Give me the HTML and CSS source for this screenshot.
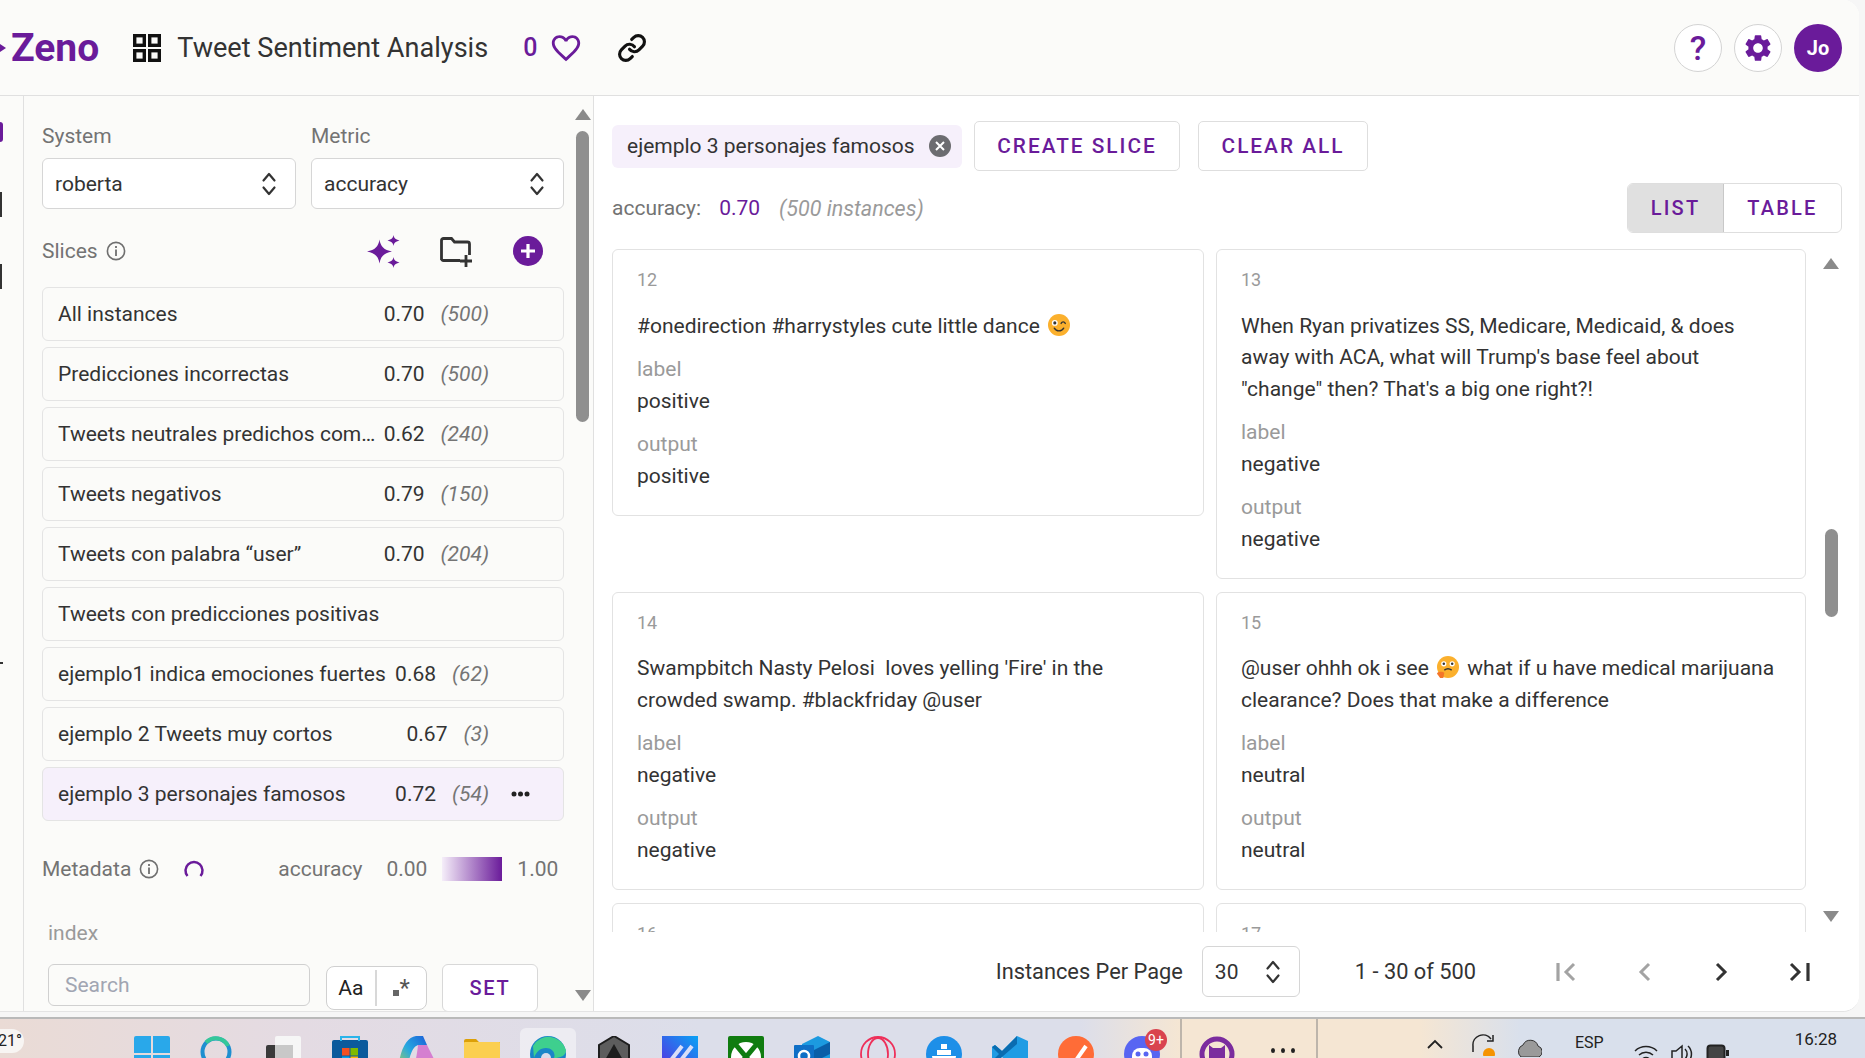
FILE: index.html
```html
<!DOCTYPE html>
<html lang="en">
<head>
<meta charset="utf-8">
<title>Zeno</title>
<link rel="stylesheet" href="styles.css">
</head>
<body>
<svg class="defs" width="0" height="0">
  <symbol id="unfold" viewBox="0 0 16 26"><path d="M2.5 9.5 8 3l5.500 6.500M2.500 16.500 8 23l5.500-6.500" fill="none" stroke="#333" stroke-width="2.200" stroke-linecap="round" stroke-linejoin="round"/></symbol>
  <symbol id="info" viewBox="0 0 20 20"><circle cx="10" cy="10" r="8.600" fill="none" stroke="#6f6f6f" stroke-width="1.600"/><rect x="9.100" y="8.500" width="1.800" height="6.500" fill="#6f6f6f"/><rect x="9.100" y="5" width="1.800" height="2" fill="#6f6f6f"/></symbol>
</svg>
<div class="window">
  <header class="topbar">
    <svg class="logo-mark" width="6" height="14" viewBox="0 0 6 14"><path d="M0 3 6 7 0 11Z" fill="#6a1b9a"/></svg>
    <span class="logo">Zeno</span>
    <svg class="grid-icon" width="28" height="28" viewBox="0 0 28 28"><g fill="none" stroke="#111" stroke-width="3.400"><rect x="1.700" y="1.700" width="9.600" height="9.600"/><rect x="16.700" y="1.700" width="9.600" height="9.600"/><rect x="1.700" y="16.700" width="9.600" height="9.600"/><rect x="16.700" y="16.700" width="9.600" height="9.600"/></g></svg>
    <span class="title">Tweet Sentiment Analysis</span>
    <span class="likes">0</span>
    <svg class="heart" width="34" height="34" viewBox="0 0 24 24"><path fill="#6a1b9a" d="M16.500 3c-1.740 0-3.410.81-4.500 2.090C10.910 3.810 9.240 3 7.500 3 4.420 3 2 5.420 2 8.500c0 3.780 3.400 6.860 8.550 11.540L12 21.350l1.450-1.320C18.600 15.360 22 12.280 22 8.500 22 5.420 19.580 3 16.500 3zm-4.400 15.550l-.1.1-.1-.1C7.140 14.240 4 11.390 4 8.500 4 6.500 5.500 5 7.500 5c1.540 0 3.040.99 3.570 2.360h1.870C13.460 5.990 14.960 5 16.500 5c2 0 3.500 1.500 3.500 3.500 0 2.890-3.140 5.740-7.900 10.050z"/></svg>
    <svg class="link-icon" width="30" height="30" viewBox="0 0 24 24"><g fill="none" stroke="#111" stroke-width="2.500" stroke-linecap="round" stroke-linejoin="round"><path d="M10 13a5 5 0 0 0 7.540.54l3-3a5 5 0 0 0-7.070-7.070l-1.720 1.710"/><path d="M14 11a5 5 0 0 0-7.540-.54l-3 3a5 5 0 0 0 7.070 7.070l1.710-1.710"/></g></svg>
    <div class="top-actions">
      <span class="round-btn help">?</span>
      <span class="round-btn"><svg width="32" height="32" viewBox="0 0 24 24"><path fill="#6a1b9a" d="M19.140 12.940c.04-.3.06-.61.06-.94 0-.32-.02-.64-.07-.94l2.030-1.580c.18-.14.23-.41.12-.61l-1.920-3.320c-.12-.22-.37-.29-.59-.22l-2.390.96c-.5-.38-1.030-.7-1.620-.94l-.36-2.540c-.04-.24-.24-.41-.48-.41h-3.840c-.24 0-.43.17-.47.41l-.36 2.540c-.59.24-1.130.57-1.620.94l-2.390-.96c-.22-.08-.47 0-.59.22L2.740 8.870c-.12.21-.08.47.12.61l2.030 1.580c-.05.3-.09.63-.09.94s.02.64.07.94l-2.030 1.580c-.18.14-.23.41-.12.61l1.920 3.320c.12.22.37.29.59.22l2.390-.96c.5.38 1.030.7 1.620.94l.36 2.540c.05.24.24.41.48.41h3.840c.24 0 .44-.17.47-.41l.36-2.540c.59-.24 1.130-.56 1.620-.94l2.390.96c.22.08.47 0 .59-.22l1.920-3.320c.12-.22.07-.47-.12-.61l-2.010-1.580zM12 15.600c-1.980 0-3.600-1.620-3.600-3.600s1.620-3.600 3.600-3.600 3.600 1.620 3.600 3.600-1.620 3.600-3.600 3.600z"/></svg></span>
      <span class="avatar">Jo</span>
    </div>
  </header>
  <div class="workspace">
    <nav class="rail">
      <i class="rail-dot"></i>
      <i class="rail-bar"></i>
      <i class="rail-bar rail-bar-second"></i>
      <i class="rail-dash"></i>
    </nav>
    <aside class="panel">
      <div class="panel-body">
        <div class="selectors">
          <div class="selector">
            <span class="field-label">System</span>
            <div class="select"><span>roberta</span><svg width="16" height="26"><use href="#unfold"/></svg></div>
          </div>
          <div class="selector">
            <span class="field-label">Metric</span>
            <div class="select"><span>accuracy</span><svg width="16" height="26"><use href="#unfold"/></svg></div>
          </div>
        </div>
        <div class="slices-head">
          <span class="field-label">Slices</span>
          <svg class="info" width="20" height="20"><use href="#info"/></svg>
          <div class="slices-tools">
            <svg class="tool-first" width="33" height="33" viewBox="0 0 33 33"><path fill="#6a1b9a" d="M12.500 4.500c1 7 4.500 10.500 12.500 12-8 1.500-11.500 5-12.500 12C11.500 21.500 8 18 0 16.500 8 15 11.500 11.500 12.500 4.500Z"/><path fill="#6a1b9a" d="M26.500 0c.5 3 1.700 4.300 6 5.500-4.300 1.200-5.500 2.500-6 5.500-.5-3-1.700-4.300-6-5.500 4.300-1.200 5.500-2.500 6-5.500ZM26.500 22c.5 3 1.700 4.300 6 5.500-4.300 1.200-5.500 2.500-6 5.500-.5-3-1.700-4.300-6-5.500 4.300-1.200 5.500-2.500 6-5.500Z"/></svg>
            <svg width="33" height="33" viewBox="0 0 33 33"><path d="M1.500 25V5.500a2 2 0 0 1 2-2h8l3 3.500h13a2 2 0 0 1 2 2V20M20 25.500H3.500a2 2 0 0 1-2-2" fill="none" stroke="#333" stroke-width="2.800"/><path d="M26 20v12M20 26h12" fill="none" stroke="#333" stroke-width="2.800"/></svg>
            <svg width="30" height="30" viewBox="0 0 30 30"><circle cx="15" cy="15" r="15" fill="#6a1b9a"/><path d="M15 8v14M8 15h14" stroke="#fff" stroke-width="3.200"/></svg>
          </div>
        </div>
        <ul class="slice-list">
          <li class="slice"><span class="slice-name">All instances</span><span class="slice-value">0.70</span><em class="slice-count">(500)</em><span class="slice-actions"></span></li>
          <li class="slice"><span class="slice-name">Predicciones incorrectas</span><span class="slice-value">0.70</span><em class="slice-count">(500)</em><span class="slice-actions"></span></li>
          <li class="slice"><span class="slice-name">Tweets neutrales predichos como negativos</span><span class="slice-value">0.62</span><em class="slice-count">(240)</em><span class="slice-actions"></span></li>
          <li class="slice"><span class="slice-name">Tweets negativos</span><span class="slice-value">0.79</span><em class="slice-count">(150)</em><span class="slice-actions"></span></li>
          <li class="slice"><span class="slice-name">Tweets con palabra “user”</span><span class="slice-value">0.70</span><em class="slice-count">(204)</em><span class="slice-actions"></span></li>
          <li class="slice"><span class="slice-name">Tweets con predicciones positivas</span></li>
          <li class="slice"><span class="slice-name">ejemplo1 indica emociones fuertes</span><span class="slice-value">0.68</span><em class="slice-count">(62)</em><span class="slice-actions"></span></li>
          <li class="slice"><span class="slice-name">ejemplo 2 Tweets muy cortos</span><span class="slice-value">0.67</span><em class="slice-count">(3)</em><span class="slice-actions"></span></li>
          <li class="slice slice-active"><span class="slice-name">ejemplo 3 personajes famosos</span><span class="slice-value">0.72</span><em class="slice-count">(54)</em><span class="slice-actions"><svg width="19" height="6" viewBox="0 0 19 6"><circle cx="3" cy="3" r="2.500"/><circle cx="9.500" cy="3" r="2.500"/><circle cx="16" cy="3" r="2.500"/></svg></span></li>
        </ul>
        <div class="meta-head">
          <span class="field-label">Metadata</span>
          <svg class="info" width="20" height="20"><use href="#info"/></svg>
          <svg class="spinner" width="20" height="20" viewBox="0 0 20 20"><path d="M3.500 17A8.500 8.500 0 1 1 16.500 17" fill="none" stroke="#6a1b9a" stroke-width="2.500"/></svg>
          <span class="scale-name">accuracy</span>
          <span class="scale-num">0.00</span>
          <span class="scale-bar"></span>
          <span class="scale-num">1.00</span>
        </div>
        <div class="meta-field">index</div>
        <div class="meta-search">
          <div class="search-box">Search</div>
          <div class="case-toggle"><span class="case-opt case-aa">Aa</span><span class="case-opt case-re"><i class="re-dot"></i><span class="re-star">*</span></span></div>
          <div class="set-btn">SET</div>
        </div>
      </div>
      <div class="scrollbar scrollbar-panel">
        <i class="arrow-up"></i>
        <i class="thumb thumb-panel"></i>
        <i class="scroll-gap"></i>
        <i class="arrow-down"></i>
      </div>
    </aside>
    <main class="main">
      <div class="filters">
        <div class="chip"><span>ejemplo 3 personajes famosos</span><svg width="22" height="22" viewBox="0 0 22 22"><circle cx="11" cy="11" r="11" fill="#6c6c70"/><path d="M7 7l8 8M15 7l-8 8" stroke="#fff" stroke-width="2"/></svg></div>
        <div class="text-btn btn-create">CREATE SLICE</div>
        <div class="text-btn btn-clear">CLEAR ALL</div>
      </div>
      <div class="summary">
        <span class="sum-label">accuracy:</span>
        <span class="sum-value">0.70</span>
        <em class="sum-count">(500 instances)</em>
        <div class="view-toggle"><span class="view-opt view-on">LIST</span><span class="view-opt">TABLE</span></div>
      </div>
      <div class="results">
        <div class="cards">
          <article class="card">
            <div class="card-id">12</div>
            <p class="card-text">#onedirection #harrystyles cute little dance <svg class="emoji" width="22" height="22" viewBox="0 0 21 21"><circle cx="10.500" cy="10.500" r="10.500" fill="#fbb02d"/><circle cx="6.500" cy="8.500" r="2.800" fill="#fff"/><circle cx="6.500" cy="8.500" r="1.500" fill="#333"/><path d="M12.500 9c1-2 3-2 4 0M6 13.500c2 3.500 7 3.500 9 0" fill="none" stroke="#333" stroke-width="1.300" stroke-linecap="round"/></svg></p>
            <div class="card-field"><span class="card-key">label</span><span class="card-val">positive</span></div>
            <div class="card-field"><span class="card-key">output</span><span class="card-val">positive</span></div>
          </article>
          <article class="card">
            <div class="card-id">13</div>
            <p class="card-text">When Ryan privatizes SS, Medicare, Medicaid, &amp; does away with ACA, what will Trump's base feel about "change" then? That's a big one right?!</p>
            <div class="card-field"><span class="card-key">label</span><span class="card-val">negative</span></div>
            <div class="card-field"><span class="card-key">output</span><span class="card-val">negative</span></div>
          </article>
          <article class="card">
            <div class="card-id">14</div>
            <p class="card-text">Swampbitch Nasty Pelosi &nbsp;loves yelling 'Fire' in the crowded swamp. #blackfriday @user</p>
            <div class="card-field"><span class="card-key">label</span><span class="card-val">negative</span></div>
            <div class="card-field"><span class="card-key">output</span><span class="card-val">negative</span></div>
          </article>
          <article class="card">
            <div class="card-id">15</div>
            <p class="card-text">@user ohhh ok i see <svg class="emoji" width="22" height="22" viewBox="0 0 21 21"><circle cx="10.500" cy="10.500" r="10.500" fill="#fbb02d"/><circle cx="6.500" cy="7.500" r="2.500" fill="#fff"/><circle cx="14.500" cy="7.500" r="2.500" fill="#fff"/><circle cx="6.500" cy="7.500" r="1.200" fill="#333"/><circle cx="14.500" cy="7.500" r="1.200" fill="#333"/><path d="M7 13.500c2-1.500 5-1.500 7 0" fill="none" stroke="#333" stroke-width="1.300"/><path d="M0 17c0-2 3-2 5-2l2 1-1 5H3Z" fill="#f4762a"/></svg> what if u have medical marijuana clearance? Does that make a difference</p>
            <div class="card-field"><span class="card-key">label</span><span class="card-val">neutral</span></div>
            <div class="card-field"><span class="card-key">output</span><span class="card-val">neutral</span></div>
          </article>
          <article class="card">
            <div class="card-id">16</div>
          </article>
          <article class="card">
            <div class="card-id">17</div>
          </article>
        </div>
        <div class="scrollbar scrollbar-main">
          <i class="arrow-up"></i>
          <i class="thumb thumb-main"></i>
          <i class="scroll-gap"></i>
          <i class="arrow-down"></i>
        </div>
      </div>
      <footer class="pager">
        <span class="pager-label">Instances Per Page</span>
        <div class="select select-page"><span>30</span><svg width="16" height="26"><use href="#unfold"/></svg></div>
        <span class="pager-range">1 - 30 of 500</span>
        <div class="pager-btns">
          <svg width="24" height="24" viewBox="0 0 24 24"><path d="M4 3v18" stroke="#a3a3a3" stroke-width="3.200"/><path d="M20 4l-8 8 8 8" fill="none" stroke="#a3a3a3" stroke-width="3"/></svg>
          <svg width="24" height="24" viewBox="0 0 24 24"><path d="M17 4l-8 8 8 8" fill="none" stroke="#a3a3a3" stroke-width="3"/></svg>
          <svg width="24" height="24" viewBox="0 0 24 24"><path d="M7 4l8 8-8 8" fill="none" stroke="#333" stroke-width="3"/></svg>
          <svg width="24" height="24" viewBox="0 0 24 24"><path d="M3 4l8 8-8 8" fill="none" stroke="#333" stroke-width="3"/><path d="M20 3v18" stroke="#333" stroke-width="3.200"/></svg>
        </div>
      </footer>
    </main>
  </div>
</div>
<div class="taskbar">
  <span class="weather">21°</span>
  <div class="task-icons">
    <svg class="task-icon" viewBox="0 0 36 36"><path fill="#29a8ea" d="M0 2a2 2 0 0 1 2-2h15v17H0ZM19 0h15a2 2 0 0 1 2 2v15H19ZM0 19h17v17H0ZM19 19h17v17H19Z"/></svg>
    <svg class="task-icon" viewBox="0 0 36 36"><circle cx="16" cy="16" r="13.500" fill="none" stroke="#1f8fd0" stroke-width="4"/><path d="M6 6.500A13.500 13.500 0 0 1 28 10" fill="none" stroke="#35c79a" stroke-width="4"/></svg>
    <svg class="task-icon" viewBox="0 0 36 36"><rect x="9" y="0" width="26" height="30" rx="2" fill="#f6f6f6"/><rect x="0" y="9" width="27" height="27" rx="2" fill="#3a3a3a"/><rect x="9" y="9" width="18" height="27" fill="#c8c8c8"/></svg>
    <svg class="task-icon" viewBox="0 0 36 36"><rect x="0" y="4" width="36" height="32" rx="2" fill="#0b5a9c"/><path d="M9 5V1h18v4" fill="none" stroke="#2ab4ea" stroke-width="2"/><rect x="10" y="12" width="7.500" height="7.500" fill="#f25022"/><rect x="18.500" y="12" width="7.500" height="7.500" fill="#7fba00"/><rect x="10" y="20.500" width="7.500" height="7.500" fill="#00a4ef"/><rect x="18.500" y="20.500" width="7.500" height="7.500" fill="#ffb900"/></svg>
    <svg class="task-icon" viewBox="0 0 36 36"><defs><linearGradient id="cp" x1="0" x2="1" y1="1" y2="0"><stop offset="0" stop-color="#b8d44a"/><stop offset=".5" stop-color="#26a8e0"/><stop offset="1" stop-color="#1c5fd8"/></linearGradient></defs><path d="M0 36C1 16 8 1 18 0h7l4 9H20c-6 2-9 12-11 27Z" fill="url(#cp)"/><path d="M20 9h9l7 14-7 13H10c5-2 8-8 10-27Z" fill="#d57fd0"/></svg>
    <svg class="task-icon" viewBox="0 0 36 36"><path d="M0 5a2 2 0 0 1 2-2h10l3 3h21v6H0Z" fill="#dca007"/><rect x="0" y="6" width="36" height="30" rx="1" fill="#fbcf50"/></svg>
    <span class="task-active"><svg class="task-icon" viewBox="0 0 36 36"><circle cx="18" cy="18" r="18" fill="#1a86c8"/><path d="M3 10A18 18 0 0 1 36 14c0 6-6 8-12 8 2-5-2-10-8-10C10 12 6 16 4 22Z" fill="#3ecf8e"/><circle cx="16" cy="22" r="5" fill="#d9dcea"/></svg></span>
    <svg class="task-icon" viewBox="0 0 36 36"><path d="M18 0 33 9v18L18 36 3 27V9Z" fill="#5d5d5d" stroke="#1e1e1e" stroke-width="2"/><path d="M18 8 27 24H9Z" fill="#1e1e1e"/></svg>
    <svg class="task-icon" viewBox="0 0 36 36"><defs><linearGradient id="gm" x1="0" x2="1" y1="1" y2="0"><stop offset="0" stop-color="#5b2be0"/><stop offset="1" stop-color="#08a3f5"/></linearGradient></defs><rect width="36" height="36" fill="url(#gm)"/><path d="M6 28 20 10M16 28 30 10" stroke="#d8def8" stroke-width="4"/></svg>
    <svg class="task-icon" viewBox="0 0 36 36"><rect width="36" height="36" rx="2" fill="#107c10"/><circle cx="18" cy="21" r="15" fill="#fff"/><path d="M8 9 28 33M28 9 8 33" stroke="#107c10" stroke-width="5"/></svg>
    <svg class="task-icon" viewBox="0 0 36 36"><path d="M8 8 24 0l12 6v18L20 36H8Z" fill="#1c9ae0"/><path d="M20 14 36 6v12L20 26Z" fill="#0a5ea8"/><rect x="0" y="9" width="20" height="24" rx="1" fill="#0f6fc6"/><circle cx="10" cy="20" r="5" fill="none" stroke="#fff" stroke-width="2.500"/></svg>
    <svg class="task-icon" viewBox="0 0 36 36"><ellipse cx="18" cy="18" rx="17" ry="17" fill="none" stroke="#ee2f59" stroke-width="1.800"/><ellipse cx="18" cy="18" rx="10" ry="16" fill="none" stroke="#ee2f59" stroke-width="1.800"/></svg>
    <svg class="task-icon" viewBox="0 0 36 36"><circle cx="18" cy="18" r="18" fill="#1d8fe8"/><path d="M6 20h24c-1 8-6 12-14 12-6 0-9-5-10-12Z" fill="#fff"/><rect x="11" y="14" width="14" height="5" fill="#fff"/><rect x="15" y="8" width="6" height="5" fill="#fff"/></svg>
    <svg class="task-icon" viewBox="0 0 36 36"><path d="M25 0 36 5v26L25 36 10 21 3 27 0 25V11l3-2 7 6Z" fill="#1f9ce4"/><path d="M25 0 10 15l-7-6-3 2 7 7-7 7 3 2L25 8Z" fill="#0a6cb0"/></svg>
    <svg class="task-icon" viewBox="0 0 36 36"><circle cx="18" cy="18" r="18" fill="#ff6c37"/><path d="M14 30 28 10" stroke="#fff" stroke-width="4"/></svg>
    <span class="task-badged"><svg class="task-icon" viewBox="0 0 36 36"><circle cx="18" cy="18" r="18" fill="#5865f2"/><rect x="8" y="12" width="20" height="24" rx="8" fill="#fff"/><circle cx="14" cy="18" r="2.500" fill="#5865f2"/><circle cx="22" cy="18" r="2.500" fill="#5865f2"/></svg><span class="badge">9+</span></span>
    <i class="task-sep"></i>
    <svg class="task-icon task-gh" viewBox="0 0 36 36"><circle cx="18" cy="18" r="15" fill="#f5e6d3" stroke="#7b2c9e" stroke-width="5"/><path d="M10 9l4 3h8l4-3v14H10Z" fill="#7b2c9e"/></svg>
    <span class="task-more"><i></i><i></i><i></i></span>
    <i class="task-sep task-sep-end"></i>
  </div>
  <div class="tray">
    <svg class="tray-chevron" width="18" height="12" viewBox="0 0 18 12"><path d="M2 10 9 3l7 7" fill="none" stroke="#222" stroke-width="1.800"/></svg>
    <svg class="tray-sync" width="24" height="22" viewBox="0 0 24 22"><path d="M2 18V12A10 10 0 0 1 20 5M22 1v6h-6" fill="none" stroke="#222" stroke-width="1.500"/><circle cx="18" cy="20" r="6" fill="#f59300"/></svg>
    <svg class="tray-cloud" width="24" height="22" viewBox="0 0 24 22"><path d="M3 22a7 7 0 0 1 2-12 8 8 0 0 1 15 1 6 6 0 0 1 1 11Z" fill="#9a9a9a" stroke="#333"/></svg>
    <span class="tray-lang">ESP</span>
    <svg class="tray-wifi" width="24" height="18" viewBox="0 0 24 18"><path d="M1 7a16 16 0 0 1 22 0M5 11a10 10 0 0 1 14 0M8.500 15a5 5 0 0 1 7 0" fill="none" stroke="#222" stroke-width="1.500"/></svg>
    <svg class="tray-sound" width="24" height="18" viewBox="0 0 24 18"><path d="M2 7h4l6-5v16H2ZM15 5a7 7 0 0 1 0 10M18 2a11 11 0 0 1 0 16" fill="none" stroke="#222" stroke-width="1.500"/></svg>
    <svg class="tray-batt" width="24" height="18" viewBox="0 0 24 18"><rect x="1.500" y="1.500" width="17" height="16" rx="3" fill="#444" stroke="#222" stroke-width="2"/><rect x="20" y="6" width="3" height="6" fill="#222"/></svg>
    <span class="tray-clock">16:28</span>
  </div>
</div>
</body>
</html>
```
FILE: styles.css
```css
* { box-sizing: border-box; }
html, body { margin: 0; padding: 0; }
body {
  width: 1865px;
  height: 1058px;
  overflow: hidden;
  background: #f6f6f6;
  font-family: Roboto, "Noto Sans", sans-serif;
  font-size: 21px;
  color: #333;
}
.defs { display: block; height: 0; }
i { display: block; }

.window {
  width: 1859px;
  height: 1012px;
  background: #fff;
  border-radius: 0 16px 16px 0;
  border-bottom: 1px solid #e4e4e4;
  overflow: hidden;
  display: flex;
  flex-direction: column;
}

/* top bar */
.topbar {
  height: 96px;
  flex: none;
  display: flex;
  align-items: center;
  background: #fbfbf9;
  border-bottom: 1px solid #e0e0e0;
}
.logo-mark { margin-right: 5px; }
.logo { font-size: 39px; font-weight: 700; color: #6a1b9a; }
.grid-icon { margin-left: 34px; }
.title { margin-left: 16px; font-size: 27.100px; color: #333; }
.likes { margin-left: 35px; font-size: 25px; font-weight: 500; color: #6a1b9a; }
.heart { margin-left: 12px; }
.link-icon { margin-left: 34px; }
.top-actions { margin-left: auto; margin-right: 17px; display: flex; gap: 12px; }
.round-btn {
  width: 48px;
  height: 48px;
  border: 1px solid #d4d4d4;
  border-radius: 50%;
  display: flex;
  align-items: center;
  justify-content: center;
  background: #fff;
}
.help { font-size: 34px; font-weight: 500; color: #6a1b9a; }
.avatar {
  width: 48px;
  height: 48px;
  border-radius: 50%;
  background: #6a1b9a;
  color: #fff;
  font-size: 20px;
  font-weight: 700;
  display: flex;
  align-items: center;
  justify-content: center;
}

.workspace { flex: 1; min-height: 0; display: flex; }

/* left rail */
.rail {
  width: 24px;
  flex: none;
  background: #fbfbf9;
  border-right: 1px solid #e0e0e0;
  padding-top: 26px;
}
.rail-dot { width: 3px; height: 20px; background: #6a1b9a; border-radius: 0 10px 10px 0; }
.rail-bar { width: 2px; height: 25px; margin-top: 50px; background: #333; }
.rail-bar-second { margin-top: 47px; }
.rail-dash { width: 3px; height: 2px; margin-top: 373px; background: #333; }

/* left panel */
.panel {
  width: 570px;
  flex: none;
  display: flex;
  background: #fbfbf9;
  border-right: 1px solid #e0e0e0;
}
.panel-body { width: 549px; flex: none; padding: 28px 9px 0 18px; overflow: hidden; }
.field-label { color: #737373; line-height: 24px; }
.selectors { display: grid; grid-template-columns: 254px 253px; gap: 15px; }
.selector { display: flex; flex-direction: column; gap: 10px; }
.select {
  height: 51px;
  background: #fff;
  border: 1px solid #d6d6d6;
  border-radius: 6px;
  padding: 0 18px 0 12px;
  display: flex;
  align-items: center;
  justify-content: space-between;
  color: #333;
}
.slices-head { margin-top: 27px; height: 30px; display: flex; align-items: center; }
.info { margin-left: 8px; flex: none; }
.slices-tools { margin-left: auto; margin-right: 21px; display: flex; align-items: center; gap: 40px; }
.slice-list { list-style: none; margin: 21px 0 0; padding: 0; display: flex; flex-direction: column; gap: 6px; }
.slice {
  height: 54px;
  padding-left: 15px;
  background: #fbfbf9;
  border: 1px solid #e4e4e4;
  border-radius: 6px;
  display: flex;
  align-items: center;
  color: #333;
}
.slice-active { background: #f6f0fb; }
.slice-name { flex: 1; min-width: 0; white-space: nowrap; overflow: hidden; text-overflow: ellipsis; }
.slice-value { flex: none; margin-left: 6px; }
.slice-count { flex: none; margin-left: 16px; color: #757575; }
.slice-actions { width: 74px; flex: none; display: flex; padding-left: 22px; }
.slice-actions svg { fill: #222; }

.meta-head { margin-top: 36px; height: 24px; display: flex; align-items: center; color: #737373; }
.spinner { margin-left: 25px; flex: none; }
.scale-name { margin-left: 74px; }
.scale-num { margin-left: 24px; }
.scale-bar { width: 60px; height: 24px; margin-left: 15px; margin-right: -9px; background: linear-gradient(90deg, #f5eef9, #6a1b9a); }
.meta-field { margin: 40px 0 0 6px; line-height: 24px; color: #9a9a9a; }
.meta-search { margin: 19px 0 0 6px; display: flex; align-items: flex-start; }
.search-box {
  width: 262px;
  height: 42px;
  padding-left: 16px;
  background: #fbfbf9;
  border: 1px solid #d0d0d0;
  border-radius: 6px;
  color: #a1a5b2;
  display: flex;
  align-items: center;
}
.case-toggle {
  width: 101px;
  height: 44px;
  margin: 2px 0 0 16px;
  background: #fff;
  border: 1px solid #d0d0d0;
  border-radius: 8px;
  display: flex;
  align-items: center;
}
.case-opt { width: 50px; height: 100%; display: flex; align-items: center; justify-content: center; color: #222; }
.case-aa { border-right: 2px solid #d8d8d8; height: 36px; }
.case-re { gap: 1px; color: #555; }
.re-dot { width: 6px; height: 6px; background: #666; margin-top: 10px; }
.re-star { font-size: 24px; line-height: 24px; }
.set-btn {
  width: 96px;
  height: 48px;
  margin-left: 15px;
  background: #fff;
  border: 1px solid #d8d8d8;
  border-radius: 6px;
  color: #6a1b9a;
  font-size: 20px;
  font-weight: 500;
  letter-spacing: 1.800px;
  display: flex;
  align-items: center;
  justify-content: center;
}

/* scrollbars */
.scrollbar { display: flex; flex-direction: column; align-items: center; flex: none; }
.scrollbar-panel { width: 19px; padding: 13px 0 10px; }
.arrow-up { width: 0; height: 0; border-left: 8px solid transparent; border-right: 8px solid transparent; border-bottom: 11px solid #8a8a8a; }
.arrow-down { width: 0; height: 0; border-left: 8px solid transparent; border-right: 8px solid transparent; border-top: 11px solid #8a8a8a; }
.thumb { width: 13px; background: #8f8f8f; border-radius: 7px; }
.thumb-panel { height: 291px; margin-top: 11px; }
.thumb-main { height: 88px; margin-top: 260px; }
.scroll-gap { flex: 1; }

/* main */
.main { flex: 1; min-width: 0; display: flex; flex-direction: column; background: #fff; }
.filters { margin-top: 25px; padding-left: 18px; height: 50px; flex: none; display: flex; align-items: center; }
.chip {
  width: 350px;
  height: 43px;
  padding: 0 11px 0 15px;
  background: #f6f0fb;
  border-radius: 6px;
  display: flex;
  align-items: center;
  justify-content: space-between;
  color: #333;
}
.text-btn {
  height: 50px;
  background: #fff;
  border: 1px solid #dedede;
  border-radius: 5px;
  color: #6a1b9a;
  font-size: 20.800px;
  font-weight: 500;
  letter-spacing: 2px;
  display: flex;
  align-items: center;
  justify-content: center;
}
.btn-create { width: 206px; margin-left: 12px; }
.btn-clear { width: 170px; margin-left: 18px; }
.summary { margin-top: 12px; height: 50px; padding: 0 17px 0 18px; flex: none; display: flex; align-items: center; }
.sum-label { color: #737373; }
.sum-value { margin-left: 18px; color: #6a1b9a; }
.sum-count { margin-left: 19px; font-size: 21.500px; color: #9a9a9a; }
.view-toggle {
  margin-left: auto;
  width: 215px;
  height: 50px;
  background: #fff;
  border: 1px solid #dedede;
  border-radius: 6px;
  display: flex;
  overflow: hidden;
}
.view-opt {
  flex: 1;
  display: flex;
  align-items: center;
  justify-content: center;
  color: #6a1b9a;
  font-size: 20px;
  font-weight: 500;
  letter-spacing: 2.200px;
}
.view-on { flex: none; width: 96px; background: #e0e0e0; border-right: 1px solid #c8c8c8; }

.results { margin-top: 16px; height: 683px; flex: none; padding-left: 18px; display: flex; overflow: hidden; }
.cards {
  width: 1194px;
  flex: none;
  display: grid;
  grid-template-columns: 592px 590px;
  gap: 12.500px 12px;
  align-items: start;
  align-content: start;
}
.card { padding: 14px 26px 23px 24px; background: #fff; border: 1px solid #e2e2e2; border-radius: 6px; }
.card-id { font-size: 18px; line-height: 32px; color: #9a9a9a; }
.card-text { margin: 14.500px 0 0; line-height: 31.600px; color: #333; }
.emoji { vertical-align: -3px; margin: 0 3px; }
.card-field { margin-top: 11px; }
.card-key { display: block; line-height: 32px; color: #9a9a9a; }
.card-val { display: block; line-height: 32px; color: #333; }
.scrollbar-main { width: 50px; padding: 9px 0 10px; }

.pager { flex: 1; padding-right: 47px; display: flex; align-items: center; justify-content: flex-end; color: #333; }
.pager-label { font-size: 21.800px; }
.select-page { width: 98px; margin-left: 19px; border-radius: 6px; }
.pager-range { margin-left: 55px; font-size: 21.800px; }
.pager-btns { margin-left: 78px; display: flex; gap: 54px; }

/* taskbar */
.taskbar {
  margin-top: 5px;
  height: 41px;
  padding-top: 17px;
  border-top: 2px solid #b9b9b9;
  background: linear-gradient(90deg, #eadbd5 0, #e4dbe3 300px, #dcdeea 700px, #dcdeea 1080px, #f5e6d3 1180px, #f5e6d3 1420px, #d9e0ec 1520px);
  display: flex;
  overflow: hidden;
}
.weather {
  width: 24px;
  height: 24px;
  margin: -7px 0 0 0;
  flex: none;
  background: #f8f5f3;
  border-radius: 0 12px 12px 0;
  font-size: 16px;
  line-height: 24px;
  color: #222;
  overflow: hidden;
  text-indent: -2px;
}
.task-icons { margin-left: 110px; display: flex; gap: 30px; flex: none; height: 36px; }
.task-icon { width: 36px; height: 36px; flex: none; display: block; }
.task-active {
  width: 56px;
  height: 36px;
  margin: -8px -10px 0;
  padding: 8px 10px 0;
  background: rgba(255, 255, 255, .45);
  border-radius: 6px 6px 0 0;
  flex: none;
}
.task-badged { width: 36px; flex: none; position: relative; }
.badge {
  position: absolute;
  top: -7px;
  left: 21px;
  width: 22px;
  height: 22px;
  border-radius: 50%;
  background: #d9434e;
  color: #fff;
  font-size: 14px;
  line-height: 22px;
  text-align: center;
}
.task-sep { width: 2px; height: 41px; margin: -17px -10px 0; background: #bdb5ab; flex: none; }
.task-gh { margin-left: -3px; }
.task-more { width: 24px; margin-left: 6px; margin-top: 12px; display: flex; gap: 6px; flex: none; }
.task-more i { width: 5px; height: 5px; border-radius: 50%; background: #222; }
.task-sep-end { margin-left: -9px; }
.tray { flex: 1; height: 36px; display: flex; font-size: 16px; color: #222; }
.tray-chevron { margin: 2px 0 0 118px; }
.tray-sync { margin: -2px 0 0 27px; }
.tray-cloud { margin: -1px 0 0 23px; }
.tray-lang { margin: -5px 0 0 33px; line-height: 24px; }
.tray-wifi { margin: 8px 0 0 30px; }
.tray-sound { margin: 8px 0 0 12px; }
.tray-batt { margin: 8px 0 0 12px; }
.tray-clock { margin: -9px 0 0 65px; font-size: 17px; line-height: 24px; }
```
